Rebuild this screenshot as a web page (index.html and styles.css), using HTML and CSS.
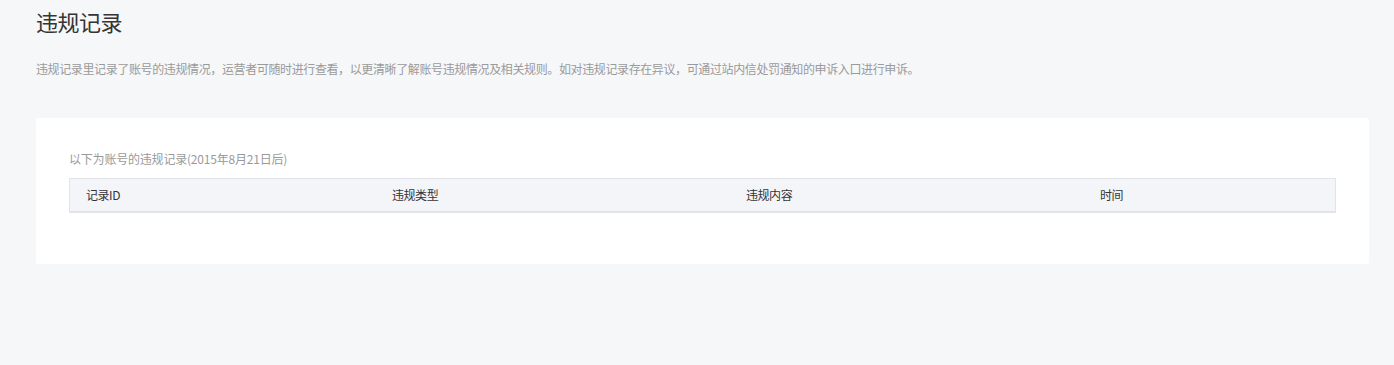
FILE: index.html
```html
<!DOCTYPE html>
<html lang="zh-CN">
<head>
    <meta charset="UTF-8">
    <meta name="viewport" content="width=device-width, initial-scale=1.0">
    <title>违规记录</title>
    <link rel="stylesheet" href="styles.css">
</head>
<body>
    <div class="page">
        <h1 class="page-title">违规记录</h1>
        <p class="page-desc">违规记录里记录了账号的违规情况，运营者可随时进行查看，以更清晰了解账号违规情况及相关规则。如对违规记录存在异议，可通过站内信处罚通知的申诉入口进行申诉。</p>
        <div class="card">
            <p class="card-tip">以下为账号的违规记录(2015年8月21日后)</p>
            <div class="table-head">
                <div class="col">记录ID</div>
                <div class="col">违规类型</div>
                <div class="col">违规内容</div>
                <div class="col">时间</div>
            </div>
        </div>
    </div>
</body>
</html>
```

FILE: styles.css
```css
body {
    margin: 0;
    background: #f6f7f9;
    font-family: "Noto Sans CJK SC", "Liberation Sans", sans-serif;
    color: #333;
}
.page {
    padding: 6px 25px 0 36px;
}
.page-title {
    margin: 0;
    font-size: 22px;
    font-weight: normal;
    line-height: 30px;
    letter-spacing: -0.5px;
    color: #353535;
}
.page-desc {
    margin: 23px 0 0;
    font-size: 12px;
    line-height: 20px;
    letter-spacing: -0.38px;
    color: #9a9a9a;
}
.card {
    margin-top: 39px;
    background: #fff;
    border-radius: 2px;
    padding: 31px 33px 51px;
}
.card-tip {
    margin: 0 0 9px;
    font-size: 12px;
    line-height: 20px;
    letter-spacing: -0.2px;
    color: #9a9a9a;
}
.table-head {
    display: grid;
    grid-template-columns: 306px 354px 354px 1fr;
    height: 32px;
    background: #f4f5f9;
    border: 1px solid #e3e4e9;
    border-bottom-width: 2px;
}
.table-head .col {
    padding-left: 16px;
    font-size: 12px;
    line-height: 32px;
    letter-spacing: -0.45px;
    color: #333;
}
```
